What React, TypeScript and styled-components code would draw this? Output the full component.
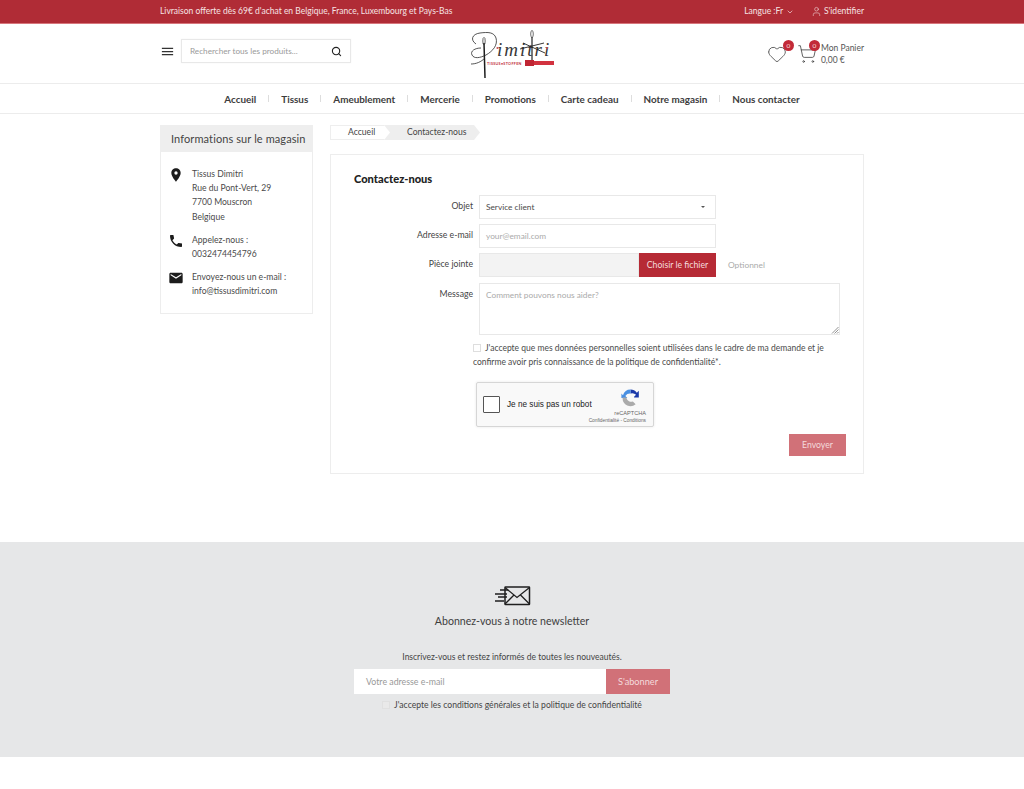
import React from "react";
import styled, { createGlobalStyle } from "styled-components";
import { Search, ChevronDown, User, Heart, ShoppingCart } from "lucide-react";
import { MdMenu, MdLocationOn, MdPhone, MdEmail } from "react-icons/md";

const Global = createGlobalStyle`
  html, body { margin: 0; padding: 0; background: #fff; }
  body { font-family: Lato, "Liberation Sans", sans-serif; color: #414141; }
  * { box-sizing: border-box; }
`;

const Page = styled.div`
  width: 1024px;
  height: 789px;
  overflow: hidden;
  display: flex;
  flex-direction: column;
`;
const Wrap = styled.div`
  width: 704px;
  margin: 0 auto;
  display: flex;
  align-items: center;
  justify-content: space-between;
`;
const TopBar = styled.div`
  height: 24px;
  background: #b02c36;
  border-bottom: 1px solid #d8767c;
  color: #f6e3e4;
  font-size: 8.5px;
  line-height: 23px;
`;
const TopRight = styled.div`
  display: flex;
  align-items: center;
  gap: 17px;
`;
const TopItem = styled.span<{ $gap: number }>`
  display: inline-flex;
  align-items: center;
  gap: ${(p) => p.$gap}px;
`;
const Header = styled.div`
  height: 60px;
  border-bottom: 1px solid #ececec;
`;
const HeaderWrap = styled(Wrap)`
  height: 59px;
`;
const SearchSide = styled.div`
  display: flex;
  align-items: center;
  gap: 6px;
  width: 230px;
  margin-bottom: 5px;
`;
const SearchBox = styled.div`
  width: 170px;
  height: 24px;
  border: 1px solid #e8e8e8;
  display: flex;
  align-items: center;
  justify-content: space-between;
  padding: 0 8px 0 8px;
  font-size: 8.2px;
  color: #9a9a9a;
  box-shadow: 0 0 2px rgba(0, 0, 0, 0.04);
`;
const LogoSlot = styled.div`
  width: 90px;
  height: 54px;
`;
const CartSide = styled.div`
  width: 230px;
  display: flex;
  justify-content: flex-end;
  align-items: center;
`;
const IconBadge = styled.div<{ $mr: number }>`
  position: relative;
  width: 20px;
  height: 20px;
  margin-right: ${(p) => p.$mr}px;
  display: flex;
  align-items: center;
  justify-content: center;
  color: #444;
`;
const Badge = styled.span<{ $right: number }>`
  position: absolute;
  top: -4px;
  right: ${(p) => p.$right}px;
  width: 11px;
  height: 11px;
  border-radius: 50%;
  background: #c22a38;
  color: #f8dcdc;
  font-size: 6.5px;
  line-height: 11px;
  text-align: center;
`;
const CartText = styled.div`
  font-size: 8.5px;
  line-height: 12.5px;
  color: #555;
  padding-top: 1px;
`;
const Nav = styled.div`
  height: 30px;
  border-bottom: 1px solid #ececec;
  display: flex;
  align-items: center;
  justify-content: center;
`;
const NavLink = styled.span`
  font-size: 9.9px;
  font-weight: 700;
  color: #3d3d3d;
  display: flex;
  align-items: center;
  &:not(:last-child)::after {
    content: "";
    width: 1px;
    height: 7px;
    background: #ddd;
    margin: 0 12px;
  }
`;
const Main = styled.div`
  width: 704px;
  margin: 11px auto 0;
  display: flex;
  gap: 17px;
  height: 417px;
  align-items: flex-start;
`;
const Sidebar = styled.aside`
  width: 153px;
  flex: none;
  border: 1px solid #ededed;
  background: #fff;
`;
const SideHead = styled.div`
  height: 27px;
  margin: -1px -1px 0;
  background: #eeeeee;
  font-size: 11px;
  letter-spacing: 0.1px;
  line-height: 27px;
  padding-left: 11px;
  color: #444;
`;
const SideBody = styled.div`
  padding: 15px 10px 14px 7px;
  display: flex;
  flex-direction: column;
  gap: 9px;
`;
const InfoRow = styled.div`
  display: flex;
  gap: 8px;
  font-size: 8.6px;
  line-height: 14.2px;
  color: #4a4a4a;
`;
const InfoIcon = styled.div`
  width: 16px;
  height: 16px;
  flex: none;
  color: #1c1c1c;
`;
const Content = styled.div`
  width: 534px;
  flex: none;
`;
const Crumbs = styled.div`
  display: flex;
  height: 15px;
  width: 150px;
  font-size: 8.6px;
  line-height: 15px;
  color: #444;
  background: #eeeeee;
  clip-path: polygon(0 0, 144px 0, 150px 50%, 144px 100%, 0 100%);
`;
const CrumbHome = styled.span`
  width: 60px;
  background: #fff;
  border: 1px solid #eee;
  border-right: none;
  line-height: 13px;
  padding-left: 17px;
  clip-path: polygon(0 0, 54px 0, 60px 50%, 54px 100%, 0 100%);
`;
const CrumbCurrent = styled.span`
  padding-left: 17px;
`;
const Card = styled.section`
  margin-top: 14px;
  height: 320px;
  border: 1px solid #ededed;
  padding: 17px 17px 0 23px;
`;
const CardTitle = styled.h1`
  margin: 0 0 9px;
  font-size: 11.1px;
  line-height: 14px;
  font-weight: 900;
  color: #222;
`;
const Row = styled.div<{ $h: number; $mb: number }>`
  display: flex;
  height: ${(p) => p.$h}px;
  margin-bottom: ${(p) => p.$mb}px;
  align-items: flex-start;
`;
const Label = styled.label`
  width: 119px;
  flex: none;
  margin-right: 6px;
  text-align: right;
  font-size: 8.7px;
  line-height: 22px;
  color: #444;
`;
const Field = styled.div<{ $w: number; $muted?: boolean }>`
  width: ${(p) => p.$w}px;
  height: 100%;
  border: 1px solid #e8e8e8;
  background: ${(p) => (p.$muted ? "#f3f3f3" : "#fff")};
  font-size: 8.3px;
  line-height: 22px;
  padding: 0 6px;
  color: #4a4a4a;
  display: flex;
  justify-content: space-between;
  position: relative;
`;
const Placeholder = styled.span`
  color: #aaa;
`;
const Caret = styled.span`
  width: 0;
  height: 0;
  margin: 10px 4px 0 0;
  border-left: 2.5px solid transparent;
  border-right: 2.5px solid transparent;
  border-top: 2.5px solid #555;
`;
const FileButton = styled.div`
  width: 77px;
  height: 100%;
  background: #b62a35;
  color: #f5dcdd;
  font-size: 8.7px;
  line-height: 24px;
  text-align: center;
`;
const Optional = styled.span`
  margin-left: 12px;
  font-size: 8.4px;
  line-height: 25px;
  color: #aaa;
`;
const Resize = styled.svg`
  position: absolute;
  right: 0;
  bottom: 0;
`;
const Consent = styled.p`
  margin: 0 0 0 119px;
  width: 370px;
  font-size: 8.5px;
  line-height: 14.3px;
  color: #4a4a4a;
`;
const Check = styled.span<{ $mr: number }>`
  display: inline-block;
  width: 8px;
  height: 8px;
  border: 1px solid #dedede;
  background: #fff;
  margin-right: ${(p) => p.$mr}px;
  vertical-align: -1px;
`;
const Captcha = styled.div`
  margin: 12px 0 0 122px;
  width: 178px;
  height: 45px;
  border: 1px solid #d6d6d6;
  border-radius: 2px;
  background: #f9f9f9;
  box-shadow: 0 0 3px rgba(0, 0, 0, 0.09);
  display: flex;
  align-items: center;
  padding-left: 6px;
  font-family: "Liberation Sans", Arial, sans-serif;
  color: #222;
  position: relative;
`;
const CaptchaBox = styled.span`
  width: 17px;
  height: 17px;
  border: 1.5px solid #555;
  border-radius: 1px;
  background: #fff;
  margin-right: 7px;
`;
const CaptchaText = styled.span`
  font-size: 8.2px;
  font-weight: 500;
`;
const CaptchaBrand = styled.div`
  position: absolute;
  right: 7px;
  top: 5px;
  display: flex;
  flex-direction: column;
  align-items: flex-end;
  font-size: 5.6px;
  color: #666;
  line-height: 7px;
`;
const CaptchaLogo = styled.svg`
  margin: 0 6px 3px 0;
`;
const CaptchaLegal = styled.span`
  font-size: 4.8px;
  line-height: 7px;
  white-space: nowrap;
`;
const Actions = styled.div`
  display: flex;
  justify-content: flex-end;
  margin-top: 7px;
`;
const SendButton = styled.div`
  width: 57px;
  height: 22px;
  background: #d17178;
  color: #f4dadc;
  font-size: 8.7px;
  line-height: 22px;
  text-align: center;
`;
const Newsletter = styled.footer`
  height: 215px;
  background: #e6e7e8;
  display: flex;
  flex-direction: column;
  align-items: center;
  padding-top: 44px;
`;
const NewsTitle = styled.h2`
  margin: 6px 0 0;
  font-size: 10.6px;
  line-height: 18px;
  font-weight: 400;
  color: #3e3e3e;
`;
const NewsText = styled.p`
  margin: 20px 0 0;
  font-size: 8.5px;
  line-height: 14px;
  color: #444;
`;
const NewsForm = styled.div`
  display: flex;
  width: 316px;
  height: 25px;
  margin-top: 5px;
`;
const NewsInput = styled.div`
  flex: 1;
  background: #fff;
  font-size: 8.8px;
  line-height: 25px;
  padding-left: 12px;
  color: #999;
`;
const NewsButton = styled.div`
  width: 64px;
  background: #d17178;
  color: #f4dadc;
  font-size: 9.2px;
  line-height: 25px;
  text-align: center;
`;
const NewsConsent = styled.div`
  margin-top: 4px;
  font-size: 8.6px;
  line-height: 14px;
  color: #444;
`;
const NewsCheck = styled(Check)`
  background: #e9e9e9;
  border-color: #e0e0e0;
`;
const LogoMark = styled.svg`
  display: block;
`;

function Logo() {
  return (
    <LogoMark width="90" height="54" viewBox="467 26 90 54" fill="none">
      <path d="M476 43C470 39 472 33 480 32c8-1 14-1 16 5 2 7-3 13-10 17-6 3-12 4-14 0-2-4 3-7 9-7" stroke="#2a2a2a" strokeWidth="0.8" />
      <path d="M471 63c5 0 10-2 14-6" stroke="#2a2a2a" strokeWidth="0.8" />
      <path d="M484 42L485 77" stroke="#1d1d1d" strokeWidth="1.5" />
      <ellipse cx="484" cy="40" rx="1.2" ry="3.6" stroke="#222" strokeWidth="0.7" />
      <text x="497" y="55" fontSize="19" fontStyle="italic" letterSpacing="2" fill="#383838" fontFamily="'Liberation Serif', serif">imitri</text>
      <path d="M532 36L532 60" stroke="#222" strokeWidth="1.2" />
      <ellipse cx="532" cy="33" rx="1.3" ry="3.6" stroke="#333" strokeWidth="0.7" />
      <path d="M520 48l24-6M523 42l22 10" stroke="#222" strokeWidth="0.9" />
      <circle cx="497.5" cy="47" r="1.1" fill="#c9505a" />
      <circle cx="547" cy="47" r="1.1" fill="#c9505a" />
      <text x="487" y="63.5" fontSize="3.7" fontWeight="700" letterSpacing="0.3" fill="#c23140" fontFamily="Lato, sans-serif">TISSUS•STOFFEN</text>
      <rect x="525" y="60" width="29" height="4" fill="#d2323f" />
      <rect x="525" y="59" width="9" height="6" fill="#c02634" />
    </LogoMark>
  );
}

export default function App() {
  return (
    <Page>
      <Global />
      <TopBar>
        <Wrap>
          <span>Livraison offerte dès 69€ d'achat en Belgique, France, Luxembourg et Pays-Bas</span>
          <TopRight>
            <TopItem $gap={3}>
              Langue :Fr
              <ChevronDown size={8} strokeWidth={2} />
            </TopItem>
            <TopItem $gap={2}>
              <User size={11} strokeWidth={1.2} />
              S'identifier
            </TopItem>
          </TopRight>
        </Wrap>
      </TopBar>
      <Header>
        <HeaderWrap>
          <SearchSide>
            <MdMenu size={15} color="#333" />
            <SearchBox>
              Rechercher tous les produits...
              <Search size={11} color="#222" strokeWidth={2.4} />
            </SearchBox>
          </SearchSide>
          <LogoSlot>
            <Logo />
          </LogoSlot>
          <CartSide>
            <IconBadge $mr={10}>
              <Heart size={20} strokeWidth={1} />
              <Badge $right={-7}>0</Badge>
            </IconBadge>
            <IconBadge $mr={4}>
              <ShoppingCart size={20} strokeWidth={1} />
              <Badge $right={-3}>0</Badge>
            </IconBadge>
            <CartText>
              Mon Panier
              <br />
              0,00 €
            </CartText>
          </CartSide>
        </HeaderWrap>
      </Header>
      <Nav>
        {["Accueil", "Tissus", "Ameublement", "Mercerie", "Promotions", "Carte cadeau", "Notre magasin", "Nous contacter"].map((n) => (
          <NavLink key={n}>{n}</NavLink>
        ))}
      </Nav>
      <Main>
        <Sidebar>
          <SideHead>Informations sur le magasin</SideHead>
          <SideBody>
            <InfoRow>
              <InfoIcon>
                <MdLocationOn size={16} />
              </InfoIcon>
              <div>
                Tissus Dimitri
                <br />
                Rue du Pont-Vert, 29
                <br />
                7700 Mouscron
                <br />
                Belgique
              </div>
            </InfoRow>
            <InfoRow>
              <InfoIcon>
                <MdPhone size={16} />
              </InfoIcon>
              <div>
                Appelez-nous :
                <br />
                0032474454796
              </div>
            </InfoRow>
            <InfoRow>
              <InfoIcon>
                <MdEmail size={16} />
              </InfoIcon>
              <div>
                Envoyez-nous un e-mail :
                <br />
                info@tissusdimitri.com
              </div>
            </InfoRow>
          </SideBody>
        </Sidebar>
        <Content>
          <Crumbs>
            <CrumbHome>Accueil</CrumbHome>
            <CrumbCurrent>Contactez-nous</CrumbCurrent>
          </Crumbs>
          <Card>
            <CardTitle>Contactez-nous</CardTitle>
            <Row $h={24} $mb={5}>
              <Label>Objet</Label>
              <Field $w={237}>
                Service client
                <Caret />
              </Field>
            </Row>
            <Row $h={24} $mb={5}>
              <Label>Adresse e-mail</Label>
              <Field $w={237}>
                <Placeholder>your@email.com</Placeholder>
              </Field>
            </Row>
            <Row $h={24} $mb={6}>
              <Label>Pièce jointe</Label>
              <Field $w={160} $muted />
              <FileButton>Choisir le fichier</FileButton>
              <Optional>Optionnel</Optional>
            </Row>
            <Row $h={52} $mb={6}>
              <Label>Message</Label>
              <Field $w={361}>
                <Placeholder>Comment pouvons nous aider?</Placeholder>
                <Resize width="8" height="8" viewBox="0 0 8 8">
                  <path d="M7.5 1L1 7.5M7.5 3.5L3.5 7.5M7.5 6L6 7.5" stroke="#777" strokeWidth="0.8" />
                </Resize>
              </Field>
            </Row>
            <Consent>
              <Check $mr={4} />
              J'accepte que mes données personnelles soient utilisées dans le cadre de ma demande et je confirme avoir pris connaissance de la politique de confidentialité*.
            </Consent>
            <Captcha>
              <CaptchaBox />
              <CaptchaText>Je ne suis pas un robot</CaptchaText>
              <CaptchaBrand>
                <CaptchaLogo width="19" height="19" viewBox="0 0 24 24" fill="none">
                  <path d="M12 2a10 10 0 0 1 8 4l2.500-2.500V12h-6v-1l2.500-2.500A7 7 0 0 0 12 7z" fill="#1c3aa9" />
                  <path d="M12 2A10 10 0 0 0 2.500 9L0.500 7v5.500H8L5.500 10A7 7 0 0 1 12 7z" fill="#4a90e2" />
                  <path d="M2 12v1a10 10 0 0 0 16.500 7.500L15 17a6 6 0 0 1-8-4v-1z" fill="#ababab" />
                </CaptchaLogo>
                reCAPTCHA
                <CaptchaLegal>Confidentialité - Conditions</CaptchaLegal>
              </CaptchaBrand>
            </Captcha>
            <Actions>
              <SendButton>Envoyer</SendButton>
            </Actions>
          </Card>
        </Content>
      </Main>
      <Newsletter>
        <svg width="37" height="20" viewBox="0 0 37 20" fill="none" stroke="#1f1f1f">
          <rect x="11" y="1" width="24.5" height="17.5" rx="0.5" strokeWidth="1.5" />
          <path d="M11 1.500l12 10 12.500-10M11 18l9-9M35.500 18l-9-9" strokeWidth="1.3" />
          <path d="M6 4h8M1 8h12M4 11h9M1 15h9" strokeWidth="1.4" />
        </svg>
        <NewsTitle>Abonnez-vous à notre newsletter</NewsTitle>
        <NewsText>Inscrivez-vous et restez informés de toutes les nouveautés.</NewsText>
        <NewsForm>
          <NewsInput>Votre adresse e-mail</NewsInput>
          <NewsButton>S'abonner</NewsButton>
        </NewsForm>
        <NewsConsent>
          <NewsCheck $mr={4} />
          J'accepte les conditions générales et la politique de confidentialité
        </NewsConsent>
      </Newsletter>
    </Page>
  );
}
